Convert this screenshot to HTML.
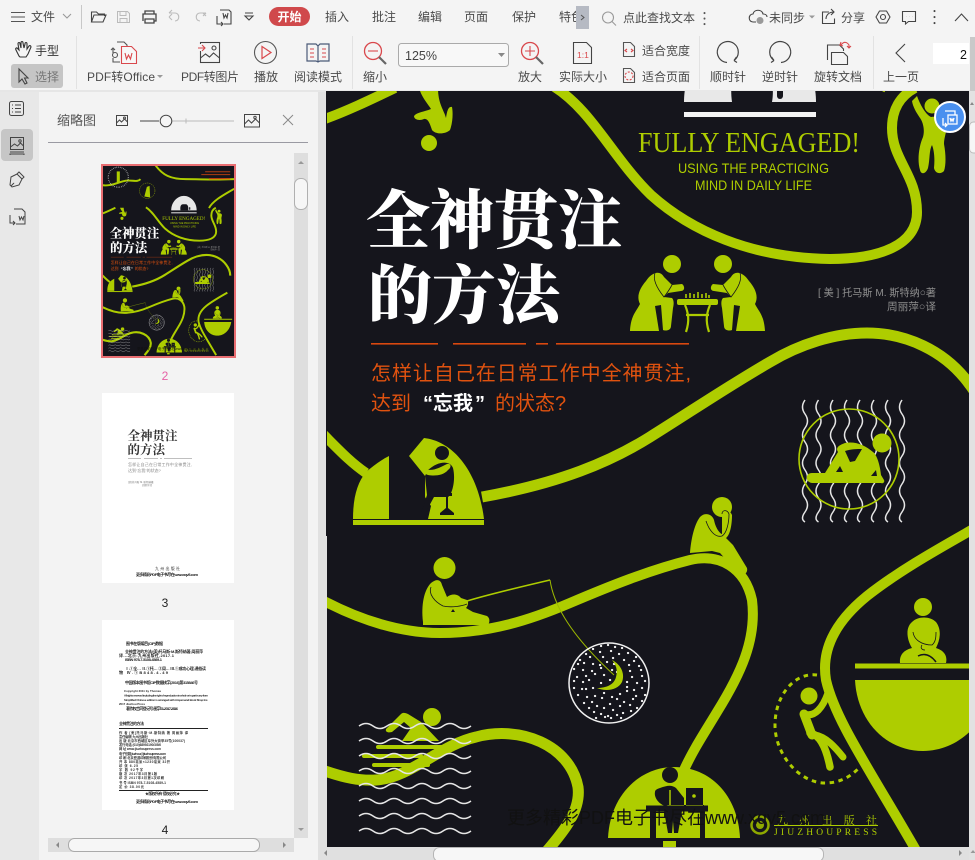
<!DOCTYPE html>
<html lang="zh"><head><meta charset="utf-8"><title>全神贯注的方法</title>
<style>
html,body{margin:0;padding:0;background:#f3f3f3;width:975px;height:860px;overflow:hidden}
svg{display:block}
text{font-family:"Liberation Sans","Noto Sans CJK SC",sans-serif}
.t{font-size:12px;fill:#4a4a4a}
.s{fill:none;stroke:#444;stroke-width:1.1}
.r{fill:none;stroke:#d9484c;stroke-width:1.1}
.b{fill:none;stroke:#aecd00;stroke-width:10}
.y{fill:#aecd00}
.d{fill:#15151c}
.o{fill:none;stroke:#15151c;stroke-width:.8}
</style></head><body>
<svg xmlns="http://www.w3.org/2000/svg" width="975" height="860" viewBox="0 0 975 860">
<defs>
<path id="w" d="M0,0q7,-5 14,0t14,0t14,0t14,0t14,0t14,0t14,0t14,0" fill="none" stroke="#e6e6e6" stroke-width="1.5"/>
<path id="v" d="M0,0q-5,7 0,14t0,14t0,14t0,14t0,14t0,14t0,14t0,14t0,10" fill="none" stroke="#e6e6e6" stroke-width="1.5"/>
<clipPath id="cm"><rect x="327" y="91" width="642" height="756"/></clipPath>
<clipPath id="ct"><rect x="103" y="166" width="131" height="190"/></clipPath>
<g id="cover">
<rect x="326" y="-140" width="690" height="1000" class="d"/>
<!-- bands -->
<path class="b" d="M322,120C345,112 370,100 395,88"/>
<path class="b" d="M553,86C592,110 612,157 651,195C690,230 750,258 830,259C880,259 917,245 917,212C917,175 892,160 892,128C892,110 900,96 915,88"/>
<path class="b" style="stroke-width:11" d="M482,497C560,483 610,462 650,437C690,412 730,385 770,362C800,344 835,333 867,333C905,333 945,350 970,385C985,405 990,425 990,440"/>
<path class="b" d="M322,433C338,449 350,462 366,473"/>
<path class="b" d="M322,600C360,620 400,633 440,633C490,633 530,620 570,603C610,586 650,570 690,560C720,553 745,568 752,600C757,640 740,675 717,712C705,732 693,750 684,770"/>
<path class="b" style="stroke-width:11" d="M322,770C345,778 360,781 376,780C410,778 440,745 476,737C520,725 570,745 578,787C581,810 565,830 546,852"/>
<path class="b" d="M975,528C940,548 900,570 867,596C835,622 821,650 826,680C835,720 870,770 917,852"/>
<!-- top dome -->
<path fill="#e8e8e8" d="M684,102C684,60 715,27 750,27C785,27 816,60 816,102Z"/>
<path class="d" d="M732,102C729,80 735,70 745,70L760,70C770,70 775,85 772,102Z"/>
<rect x="777" y="85" width="6" height="14" rx="3" class="d"/>
<rect x="684" y="112" width="132" height="5" fill="#f3f3f3"/>
<!-- extra top art (visible in thumbnail) -->
<path class="b" d="M322,-30C360,-20 400,-40 440,-50C480,-60 505,-40 525,-60"/>
<circle cx="410" cy="-70" r="52" fill="none" stroke="#d0d0d0" stroke-width="6" stroke-dasharray="3 6"/>
<rect x="402" y="-100" width="16" height="60" class="y"/>
<circle cx="560" cy="0" r="40" fill="none" stroke="#aecd00" stroke-width="2.5" stroke-dasharray="6 5"/>
<path class="y" d="M545,30L558,-20L572,-25L575,35Z"/>
<path class="b" d="M600,-135C640,-80 680,-60 760,-60C840,-60 900,-55 1010,-60"/>
<path class="b" d="M1010,-10C960,20 900,50 880,90"/>
<rect x="860" y="-100" width="130" height="4" fill="#d9480f"/><rect x="840" y="-85" width="150" height="4" fill="#d9480f"/><rect x="880" y="-65" width="110" height="6" fill="#d9480f"/>
<!-- top figure -->
<path class="y" d="M419,88C422,98 428,104 431,109C424,112 417,112 414,116C414,120 420,121 424,119C428,118 430,124 432,130C436,135 446,134 450,130C453,122 453,112 452,107C448,106 447,112 446,118C444,110 438,104 438,88Z"/>
<circle cx="429" cy="143" r="8" class="y"/>
<!-- hanging figure top right -->
<circle cx="932" cy="106" r="7.5" class="y"/>
<path class="y" d="M912,101L917,96C920,104 925,114 931,117C938,116 946,118 947,126C946,134 944,138 944,144C946,155 946,165 944,171C940,175 935,173 934,168C935,158 934,150 932,145C929,150 930,160 928,168C926,174 921,175 920,170C917,160 919,146 923,137C925,130 923,122 920,118C916,112 913,107 912,101Z"/>
<!-- chess players -->
<g id="pl"><path class="y" d="M630,331C631,315 636,312 640,304C636,296 640,288 646,281C652,272 660,270 664,277L672,285L682,284C685,286 685,291 681,291L668,293L664,297L672,298C674,300 674,304 673,308L671,326C671,331 665,331 663,330L661,305L655,306L659,331Z"/>
<circle cx="672" cy="264" r="9" class="y"/>
<path class="o" d="M655,273C652,281 660,292 664,297C668,292 672,285 672,285"/></g>
<use href="#pl" transform="matrix(-1 0 0 1 1395 0)"/>
<rect x="677" y="299" width="41" height="6" rx="2" class="y"/>
<path d="M685,305C688,312 690,320 686,332M710,305C707,312 705,320 709,332M686,315L709,315" fill="none" stroke="#aecd00" stroke-width="2.2"/>
<path d="M686,298v-4M690,298v-5M694,298v-4M698,298v-6M702,298v-4M706,298v-5M709,298v-3" stroke="#aecd00" stroke-width="1.6"/>
<!-- titles -->
<text x="366" y="243" font-size="64" font-weight="900" fill="#fff" textLength="256" style='font-family:"Noto Serif CJK SC",serif'>全神贯注</text>
<text x="368" y="318" font-size="64" font-weight="900" fill="#fff" style='font-family:"Noto Serif CJK SC",serif'>的方法</text>
<g fill="#d9480f"><rect x="371" y="343" width="67" height="1.6"/><rect x="453" y="343" width="73" height="1.6"/><rect x="536" y="343" width="12" height="1.6"/><rect x="556" y="343" width="133" height="1.6"/></g>
<text x="371" y="380" font-size="20" fill="#e0520f" textLength="320">怎样让自己在日常工作中全神贯注,</text>
<text y="410" font-size="20" fill="#e0520f"><tspan x="371">达到</tspan><tspan x="423" fill="#fff" font-weight="700">“</tspan><tspan x="433" fill="#fff" font-weight="700">忘我</tspan><tspan x="475" fill="#fff" font-weight="700">”</tspan><tspan x="495">的状态?</tspan></text>
<text x="638" y="152" font-size="29" fill="#aecd00" textLength="222" lengthAdjust="spacingAndGlyphs" style='font-family:"Liberation Serif",serif'>FULLY ENGAGED!</text>
<text x="678" y="173" font-size="14" fill="#aecd00" textLength="151" lengthAdjust="spacingAndGlyphs">USING THE PRACTICING</text>
<text x="695" y="190" font-size="14" fill="#aecd00" textLength="117" lengthAdjust="spacingAndGlyphs">MIND IN DAILY LIFE</text>
<text x="818" y="296" font-size="10.5" fill="#8e8e8e" textLength="118" lengthAdjust="spacingAndGlyphs">[ 美 ] 托马斯 M. 斯特纳○著</text>
<text x="887" y="310" font-size="10.5" fill="#8e8e8e" textLength="49" lengthAdjust="spacingAndGlyphs">周丽萍○译</text>
<!-- desk dome -->
<path class="y" d="M389,456L389,519L353,519C353,498 357,483 366,472C373,466 381,460 389,456Z"/>
<path class="y" d="M409,456L424,438C452,441 478,470 484,519L428,519L431,506L425,497L425,476Z"/>
<rect x="353" y="520" width="131" height="5" class="y"/>
<circle cx="442" cy="453" r="7" class="d"/>
<path class="d" d="M428,470C438,461 450,460 453,468C456,480 452,495 448,497L434,497L428,508L424,519L420,517L427,495L425,476Z"/>
<path class="y" d="M426,469C432,472 441,467 447,464C451,463 452,467 448,470C443,476 434,476 428,475C424,474 423,470 426,469Z"/>
<path class="d" d="M441,493h11v3h-4v12l6,5v2h-14v-2l6,-5v-12h-5Z"/>
<!-- thinker -->
<path class="y" d="M690,553C691,540 694,525 700,517C705,512 712,514 714,520C716,530 721,534 722,534L722,515C724,508 730,510 732,515C732,525 730,535 726,538L733,545L747,568C748,572 745,575 742,575L728,562L720,553L712,551Z"/>
<circle cx="722" cy="507" r="10" class="y"/>
<path class="o" d="M706,521C709,530 715,538 722,536C727,533 729,522 729,514C727,509 722,510 722,514"/>
<!-- relaxed figure -->
<use href="#v" x="805" y="400"/><use href="#v" x="818.500" y="400"/><use href="#v" x="833" y="400"/><use href="#v" x="847" y="400"/><use href="#v" x="860" y="400"/><use href="#v" x="874" y="400"/><use href="#v" x="888" y="400"/><use href="#v" x="902" y="400"/>
<circle cx="849" cy="459" r="50" fill="none" stroke="#aecd00" stroke-width="1.6"/>
<path class="y" d="M812,473L825,473L838,452C835,447 840,445 845,443C855,441 865,445 873,452C877,455 880,465 881,475L884,480C885,482 883,484 881,483L812,483C805,482 805,473 812,473Z"/>
<circle cx="882" cy="443" r="9.500" class="y"/>
<path class="d" d="M836,472L840,466L843,472ZM845,451C851,449 857,449 862,449L855,461L850,462ZM871,476L876,470L877,476Z"/>
<!-- fisherman -->
<circle cx="444.500" cy="568" r="11" class="y"/>
<path class="y" d="M423,622C421,605 424,590 431,583C437,578 441,580 442,585L447,597C452,593 458,594 461,598L467,600C469,602 468,606 466,608L473,612L487,616C490,618 490,622 488,625L423,625Z"/>
<path class="o" d="M431,587C428,594 435,602 443,606C452,608 462,606 467,604"/>
<path class="y" d="M451,595L457,596L457,600L451,600Z"/>
<path d="M451,612l2,-3l2,3Z" class="d"/>
<path d="M467,601C490,594 520,587 550,580" fill="none" stroke="#aecd00" stroke-width="1.500"/>
<path d="M550,580C553,600 565,630 614,675" fill="none" stroke="#9db900" stroke-width="1"/>
<!-- moon -->
<circle cx="609" cy="683" r="40" fill="none" stroke="#f0f0f0" stroke-width="1.500"/>
<path d="M601,646h.1M608,645h.1M615,647h.1M622,648h.1M593,649h.1M586,654h.1M600,652h.1M611,651h.1M619,654h.1M628,653h.1M636,657h.1M580,660h.1M590,657h.1M603,657h.1M613,658h.1M624,660h.1M634,661h.1M578,664h.1M584,663h.1M593,664h.1M600,665h.1M607,662h.1M614,664h.1M629,665h.1M639,666h.1M574,669h.1M583,670h.1M592,671h.1M601,668h.1M612,670h.1M630,671h.1M641,670h.1M577,677h.1M586,676h.1M595,674h.1M604,675h.1M617,672h.1M632,677h.1M642,676h.1M574,681h.1M583,682h.1M589,680h.1M601,683h.1M610,680h.1M627,682h.1M637,683h.1M645,681h.1M574,688h.1M582,689h.1M586,689h.1M593,688h.1M627,687h.1M634,690h.1M642,688h.1M578,695h.1M587,697h.1M595,696h.1M604,693h.1M612,697h.1M620,694h.1M627,691h.1M636,696h.1M645,695h.1M584,703h.1M592,702h.1M602,698h.1M610,704h.1M617,699h.1M624,702h.1M633,699h.1M642,701h.1M589,708h.1M597,706h.1M604,708h.1M613,710h.1M620,706h.1M630,705h.1M637,708h.1M594,712h.1M601,714h.1M608,716h.1M617,715h.1M623,713h.1M631,711h.1M596,718h.1M605,717h.1M611,718h.1M621,718h.1" stroke="#f0f0f0" stroke-width="2.300" stroke-linecap="round" fill="none"/>
<path class="y" d="M612,660C622,665 625,675 622,682C618,690 606,692 597,688C606,688 614,685 616,677C618,670 616,665 612,660Z"/>
<!-- swimmer -->
<circle cx="432" cy="717" r="9" class="y"/>
<path class="y" d="M386,729L401,714C403,712 406,713 408,714L421,722L439,741L402,741L411,728L404,722L392,732C388,733 385,732 386,729Z"/>
<rect x="376" y="745" width="75" height="4" rx="2" class="y"/><rect x="362" y="754" width="61" height="4" rx="2" class="y"/><rect x="372" y="763" width="58" height="4" rx="2" class="y"/>
<use href="#w" x="359" y="726"/><use href="#w" x="359" y="741"/><use href="#w" x="359" y="756"/><use href="#w" x="359" y="771"/><use href="#w" x="359" y="786"/><use href="#w" x="359" y="801"/><use href="#w" x="359" y="816"/><use href="#w" x="359" y="831"/>
<!-- bowl -->
<path class="y" d="M855,680L995,680C990,720 960,751 923,751C885,751 857,720 855,680Z"/>
<rect x="855" y="663.500" width="145" height="5" class="y"/>
<circle cx="923" cy="607" r="9" class="y"/>
<path class="y" d="M900,663C899,652 908,649 912,648C907,640 905,628 912,622C918,616 930,616 936,622C942,630 940,640 936,648C942,650 948,654 946,663Z"/>
<path class="o" d="M913,632C914,640 922,645 932,645C936,642 936,636 936,632M922,645C920,648 922,650 925,650"/>
<path d="M918,656C924,653 930,654 936,662" fill="none" stroke="#15151c" stroke-width="1.500"/>
<!-- climber -->
<path d="M817,675C795,672 775,695 775,725C775,755 800,783 825,783C842,783 852,775 860,767" fill="none" stroke="#aecd00" stroke-width="3" stroke-dasharray="4.500 4.500"/>
<circle cx="809" cy="696" r="8.500" class="y"/>
<g fill="none" stroke="#aecd00" stroke-linecap="round"><path stroke-width="7" d="M804,714C815,718 823,707 828,693"/><path stroke-width="9" d="M804,714L812,735"/><path stroke-width="7.500" d="M810,733C820,735 826,747 830,767"/><path stroke-width="7" d="M815,735C826,737 835,747 843,757"/></g>
<!-- bottom dome -->
<path class="y" d="M608,838C610,795 640,767 674,767C710,767 738,795 740,838Z"/>
<circle cx="670" cy="775" r="8" class="d"/>
<path class="d" d="M660,788C668,785 672,785 676,788L684,798L684,805L668,805L665,806C657,803 654,796 655,792C655,790 657,789 660,788Z"/>
<path d="M670,790L670,805" stroke="#aecd00" stroke-width="1.500"/>
<path class="d" d="M686,788h17v18h-17ZM684,806h20v-1h-20Z"/>
<circle cx="694" cy="796" r="1.800" class="y"/>
<rect x="646" y="805.500" width="62" height="6" class="d"/>
<rect x="650" y="811" width="6" height="27" class="d"/><rect x="700" y="811" width="5" height="27" class="d"/>
<path class="d" d="M664,811h18l-4,22h-4l-1,-12l-1,12h-4Z"/>
<rect x="663" y="841" width="13" height="7" class="y"/>
<circle cx="760" cy="825" r="8.500" fill="none" stroke="#8ea800" stroke-width="2.500"/><circle cx="760" cy="825" r="4" fill="#8ea800"/>
<text x="777" y="824" font-size="11" fill="#aecd00" textLength="100" style='font-family:"Noto Serif CJK SC",serif'>九 州 出 版 社</text>
<rect x="774" y="825" width="104" height="1" fill="#aecd00"/>
<text x="774" y="835" font-size="9.500" fill="#aecd00" textLength="103" style='font-family:"Liberation Serif",serif'>JIUZHOUPRESS</text>
<text x="507" y="824" font-size="18" fill="#111" textLength="318">更多精彩PDF电子书尽在www.xqv5.com</text>
</g>
</defs>

<rect width="975" height="860" fill="#f3f3f3"/>
<!-- main -->
<rect x="318" y="91" width="9" height="769" fill="#e1e1e1"/>
<rect x="969" y="91" width="6" height="769" fill="#e2e2e2"/>
<g clip-path="url(#cm)"><use href="#cover"/></g>
<rect x="326" y="91" width="1" height="445" fill="#15151c"/>
<!-- right scroll -->
<path d="M972,102l-2,3h4Z" fill="#888"/>
<rect x="969.500" y="122" width="10" height="31" rx="4" fill="#f6f6f6" stroke="#bbb"/>
<path d="M973,847l-2.500,3h5Z" fill="#999" transform="translate(0,3)"/>
<!-- bottom scroll -->
<rect x="320" y="847" width="649" height="13" fill="#e0e0e0"/>
<path d="M327,850v6l-3,-3Z" fill="#888"/>
<rect x="433.500" y="847.500" width="390" height="14" rx="6" fill="#f7f7f7" stroke="#b5b5b5"/>
<path d="M959,850v6l3,-3Z" fill="#888"/>
<!-- float -->
<circle cx="950" cy="117" r="15" fill="#4a90ef" stroke="#fff" stroke-width="2"/>
<g fill="none" stroke="#fff" stroke-width="1.300"><path d="M945,111h10v4"/><rect x="948" y="115" width="9" height="9" fill="#4a90ef"/><path d="M950,118l1,3l1,-2l1,2l1,-3"/><path d="M943,118v7h4m-2,-2l2,2l-2,2"/></g>

<!-- sidebar -->
<rect x="0" y="91" width="39" height="769" fill="#e8e8e8"/>
<rect x="1" y="129" width="32" height="32" rx="4" fill="#c6c6c6"/>
<g class="s" style="fill:none;stroke:#444;stroke-width:1">
<rect x="9.500" y="101.500" width="14" height="14" rx="2"/><path d="M12,105h1M15,105h6M12,108.500h1M15,108.500h6M12,112h1M15,112h6"/>
<rect x="10.500" y="137.500" width="13" height="12" /><path d="M10.500,147l4,-3l3,2l3,-3l3,3"/><circle cx="20" cy="141" r="1.200"/><path d="M10,152h14M10,155v-1h14v1"/>
<path d="M11,177l6,-3l5,5l-3,6l-7,2l-2,-2ZM17,174l2,-2l5,5l-2,2M14,183h.1M11,186l3,-3"/>
<path d="M14,209h8l3,3v12h-9M19,216l1,4l1.500,-3l1.500,3l1,-4"/><path d="M10,215v8h5m-2,-2l2,2l-2,2"/>
</g>

<!-- thumbnail panel -->
<rect x="39" y="91" width="279" height="769" fill="#f3f3f3"/>
<text x="57" y="125" font-size="13" fill="#555">缩略图</text>
<g fill="none" stroke="#444" stroke-width="1"><rect x="116.500" y="115.500" width="11" height="10"/><path d="M116.500,123l3,-3l2,2l3,-3l3,3"/><circle cx="124.500" cy="118" r="1"/>
<rect x="244.500" y="114.500" width="15" height="12.500"/><path d="M244.500,124l4,-4l3,3l4,-4l4,4"/><circle cx="255" cy="117.500" r="1.200"/>
<path d="M283,115l10,10M293,115l-10,10" stroke="#888"/></g>
<path d="M140,121h19" stroke="#444" stroke-width="1"/><path d="M172,121h62M186,118.500v5" stroke="#bbb" stroke-width="1"/>
<circle cx="166" cy="121" r="5.800" fill="#f5f5f5" stroke="#444"/>
<rect x="48" y="142" width="260" height="1" fill="#9a9aa2"/>
<!-- vscroll -->
<rect x="294" y="153" width="14" height="685" fill="#dedede"/>
<path d="M301,161l-3,3h6Z" fill="#999"/>
<rect x="294.500" y="178.500" width="13" height="31" rx="6" fill="#f6f6f6" stroke="#b0b0b0"/>
<path d="M298,828h6l-3,3Z" fill="#999"/>
<!-- hscroll -->
<rect x="48" y="838" width="246" height="14" fill="#dedede"/>
<path d="M59,842v6l-3,-3Z" fill="#888"/><path d="M283,842v6l3,-3Z" fill="#888"/>
<rect x="68.500" y="838.500" width="191" height="13" rx="6" fill="#f6f6f6" stroke="#aaa"/>

<!-- thumb page 2 -->
<rect x="101" y="164" width="135" height="194" fill="#e96e72"/>
<rect x="103" y="166" width="131" height="190" fill="#15151c"/>
<g clip-path="url(#ct)"><use href="#cover" transform="translate(39.170 190.720) scale(.193)"/></g>
<text x="165" y="380" font-size="12" fill="#e660a5" text-anchor="middle">2</text>

<!-- thumb page 3 -->
<rect x="102" y="393" width="132" height="190" fill="#fff"/>
<text x="127.500" y="440" font-size="12.500" font-weight="700" fill="#333" style='font-family:"Noto Serif CJK SC",serif'>全神贯注</text>
<text x="127.500" y="454" font-size="12.500" font-weight="700" fill="#333" style='font-family:"Noto Serif CJK SC",serif'>的方法</text>
<path d="M128,458.500h13M144,458.500h14M160,458.500h2M164,458.500h28" stroke="#aaa" stroke-width=".8"/>
<text x="128" y="466" font-size="4" fill="#888" textLength="64">怎样让自己在日常工作中全神贯注,</text>
<text x="128" y="472" font-size="4" fill="#888">达到“忘我”的状态?</text>
<text x="128" y="483" font-size="2.500" fill="#777">[美]托马斯 M. 斯特纳著</text><text x="142" y="486" font-size="2.500" fill="#888">周丽萍译</text>
<text x="155" y="570" font-size="4" fill="#333" textLength="25">九州出版社</text>
<text x="136" y="576" font-size="4" font-weight="700" fill="#222" textLength="62">更多精彩PDF电子书尽在www.xqv5.com</text>
<text x="165" y="607" font-size="12" fill="#222" text-anchor="middle">3</text>

<!-- thumb page 4 -->
<rect x="102" y="620" width="132" height="190" fill="#fff"/>
<g font-size="4" font-weight="700" fill="#222">
<text x="126" y="645" textLength="37">图书在版编目(CIP)数据</text>
<text x="125" y="653" textLength="78">全神贯注的方法/(美)托马斯·M.斯特纳著;周丽萍</text>
<text x="119" y="657" textLength="55">译.--北京:九州出版社,2017.1</text>
<text x="125" y="661" textLength="37">ISBN 978-7-5108-4589-1</text>
<text x="125" y="670" textLength="81">Ⅰ.①全… Ⅱ.①托… ②周… Ⅲ.①成功心理-通俗读</text>
<text x="119" y="674" textLength="49">物 Ⅳ.①B848.4-49</text>
<text x="125" y="684" textLength="73">中国版本图书馆CIP数据核字(2016)第315846号</text>
<text x="124" y="692" font-size="2.800" textLength="37">Copyright 2011 by Thomas</text>
<text x="124" y="696.500" font-size="2.800" textLength="84">All rights reserved including the right of reproduction in whole or in part in any form</text>
<text x="124" y="701" font-size="2.800" textLength="84">Simplified Chinese edition is arranged with Ampersand Book Shop Inc.</text>
<text x="119" y="705" font-size="2.800" textLength="26">2017 Jiuzhou Press</text>
<text x="126" y="710" textLength="52">著作权合同登记号:图字01-2017-2816</text>
<text x="119" y="725" textLength="25">全神贯注的方法</text>
</g>
<rect x="119" y="728" width="89" height="1" fill="#222"/>
<g font-size="3.300" font-weight="700" fill="#333">
<text x="119" y="734" textLength="69">作 者 [美]托马斯·M.斯特纳 著 周丽萍 译</text>
<text x="119" y="738" textLength="29">责任编辑 九州出版社</text>
<text x="119" y="742" textLength="66">出 版 北京市西城区阜外大街甲35号(100037)</text>
<text x="119" y="746" textLength="42">发行电话 (010)68992190/3/5/6</text>
<text x="119" y="750" textLength="42">网 址 www.jiuzhoupress.com</text>
<text x="119" y="755" textLength="47">电子信箱 jiuzhou@jiuzhoupress.com</text>
<text x="119" y="759" textLength="47">印 刷 北京盛通印刷股份有限公司</text>
<text x="119" y="763" textLength="51">开 本 880毫米×1230毫米 32开</text>
<text x="119" y="767" textLength="19">印 张 6.25</text>
<text x="119" y="771" textLength="24">字 数 92千字</text>
<text x="119" y="775" textLength="38">版 次 2017年3月第1版</text>
<text x="119" y="779" textLength="45">印 次 2017年3月第1次印刷</text>
<text x="119" y="784" textLength="47">书 号 ISBN 978-7-5108-4589-1</text>
<text x="119" y="788" textLength="25">定 价 38.00元</text>
</g>
<rect x="119" y="790" width="89" height="1" fill="#222"/>
<text x="145" y="795" font-size="3.800" font-weight="700" fill="#222" textLength="35">★版权所有 侵权必究★</text>
<text x="136" y="803" font-size="4" font-weight="700" fill="#222" textLength="62">更多精彩PDF电子书尽在www.xqv5.com</text>
<text x="165" y="834" font-size="12" fill="#222" text-anchor="middle">4</text>

<!-- toolbar -->
<rect width="975" height="90" fill="#f4f4f4"/>
<rect y="90" width="326" height="2" fill="#e6e6e6"/>
<rect x="326" y="90" width="649" height="1" fill="#e8e8e8"/>
<!-- row 1 -->
<path d="M11,12.500h14M11,17h14M11,21.500h14" stroke="#555" stroke-width="1"/>
<text class="t" x="31" y="21">文件</text>
<path d="M63,14l4,4l4,-4" class="s" style="stroke:#999"/>
<rect x="81" y="5" width="1" height="24" fill="#c8c8c8"/>
<path class="s" d="M91.500,22V12h5l2,2h6v2M91.500,22l2.500,-7h12l-3,7Z"/>
<path d="M117.500,11.500h10l2,2v9h-12ZM120,11.500v4h6v-4M120,22.500v-4h7v4" fill="none" stroke="#bbb" stroke-width="1"/>
<path class="s" d="M145,14v-3h9v3M143,21v-7h13v7h-2M145,19h9v4h-9Z" style="stroke-width:1.300"/>
<path d="M172,16l-3,3m0,0l3,3M169,15l3,-3M169,15h6c5,0 5,8 0,8" fill="none" stroke="#bbb" stroke-width="1.100" transform="translate(0,-2)"/>
<path d="M203,16l3,-3M203,13l3,3M206,13h-6c-5,0 -5,8 0,8" fill="none" stroke="#bbb" stroke-width="1.100"/>
<path class="s" d="M220,10h9l2,2v12h-7M223,13l1,5l1.500,-3l1.500,3l1,-5"/><path class="s" d="M217,16v8h6m-2,-2l2,2l-2,2"/>
<path class="s" d="M245,16h8l-4,4ZM245,13h8"/>
<rect x="269" y="7" width="41" height="19" rx="9.500" fill="#d0494b"/>
<text x="277.500" y="21" font-size="12" font-weight="700" fill="#fff">开始</text>
<text class="t" x="325" y="21">插入</text><text class="t" x="372" y="21">批注</text><text class="t" x="418" y="21">编辑</text><text class="t" x="464" y="21">页面</text><text class="t" x="512" y="21">保护</text><text class="t" x="559" y="21">特色</text>
<rect x="576" y="6" width="13" height="23" fill="#b6bac3"/>
<path d="M581,15l3,2.500l-3,2.500" fill="none" stroke="#555"/>
<circle cx="608" cy="17.500" r="5.500" class="s" style="stroke:#999"/><path d="M612,21.500l4,4" stroke="#999" stroke-width="1.100"/>
<text class="t" x="623" y="22">点此查找文本</text>
<path d="M704.500,13v.1M704.500,18.500v.1M704.500,24v.1" stroke="#555" stroke-width="2" stroke-linecap="round"/>
<path class="s" d="M756,22h-3c-5,0 -5,-8 0,-8c1,-5 9,-5 10,0c2,0 4,1 4,3"/><circle cx="760" cy="20.500" r="3.500" fill="#999"/>
<text class="t" x="769" y="22">未同步</text><path d="M809,15.500h6l-3,3Z" fill="#999"/>
<path class="s" d="M829,12h-6.500v11.500h12v-5M826,19c0,-4 3,-7 8,-7M831,9l3,3l-3,3"/>
<text class="t" x="841" y="22">分享</text>
<path class="s" stroke-linejoin="round" d="M879.500,11L886.500,11L890,17L886.500,23L879.500,23L876,17Z" style="stroke-linejoin:round"/><circle cx="883" cy="17" r="2.500" class="s"/>
<path class="s" d="M902.500,11.500h13v10h-7l-3,2.500v-2.500h-3ZM906,16.500h.1M909,16.500h.1M912,16.500h.1"/>
<path d="M934.500,11v.1M934.500,17v.1M934.500,23v.1" stroke="#444" stroke-width="2" stroke-linecap="round"/>
<path class="s" d="M955,21l6.500,-7l6.500,7"/>

<!-- row 2 -->
<rect x="76" y="36" width="1" height="53" fill="#e2e2e2"/><rect x="352" y="36" width="1" height="53" fill="#e2e2e2"/><rect x="699" y="36" width="1" height="53" fill="#e2e2e2"/><rect x="873" y="36" width="1" height="53" fill="#e2e2e2"/>
<path class="s" style="stroke:#333" d="M19,56L16,50C15,48 17,47 18,49L19,50L18,44C18,42 20,42 20,44L21,48L21,43C21,41 23,41 23,43L24,48L25,44C25,42 27,42 27,44L27,49L29,46C30,45 31,46 31,47L28,54L26,57L20,57Z"/>
<text class="t" x="35" y="55" style="fill:#333">手型</text>
<rect x="11" y="64" width="52" height="24" rx="3" fill="#c5c5c5"/>
<path class="s" d="M19,69L19,82L22,79L25,84L27,83L24.500,78L28,78Z"/>
<text x="35" y="81" font-size="12" fill="#777">选择</text>
<!-- pdf2office -->
<path class="s" d="M117,42h7l3,3v3M113,53v-4M113,58v4h7M115,50l-2,-2l-2,2" style="stroke:#555"/><circle cx="115" cy="55" r="2.500" class="s" style="stroke:#555"/>
<path d="M121.500,46.500h10l5,5v12h-15Z" fill="#f7f7f7" stroke="#d9484c" stroke-width="1.100"/><path class="r" d="M125,53l1.500,6l2,-4l2,4l1.500,-6"/>
<text class="t" x="87" y="81" textLength="68">PDF转Office</text><path d="M157,75h6l-3,3Z" fill="#999"/>
<!-- pdf2img -->
<rect x="200.500" y="42.500" width="19" height="20" class="s"/><path class="s" d="M200.500,58l5,-4l4,3l4,-4l6,5"/><circle cx="214" cy="48" r="2" class="s"/>
<rect x="197" y="44" width="8" height="7" fill="#f4f4f4"/><path class="r" d="M198,48h7m-3,-3l3,3l-3,3"/>
<text class="t" x="181" y="81" textLength="58">PDF转图片</text>
<!-- play -->
<circle cx="265.500" cy="52.500" r="11" class="s" style="stroke:#555"/><path d="M262,46.500v12l9,-6Z" fill="none" stroke="#d9484c" stroke-width="1.200"/>
<text class="t" x="254" y="81">播放</text>
<!-- read -->
<path d="M307,44h9l2,2l2,-2h9v17h-9l-2,1l-2,-1h-9ZM318,46v16" fill="none" stroke="#4a5a78" stroke-width="1.200"/>
<path class="r" d="M310,49h4M310,53h4M310,57h4M322,49h4M322,53h4M322,57h4"/>
<text class="t" x="294" y="81">阅读模式</text>
<!-- zoom out -->
<circle cx="373" cy="51" r="8.500" class="r" style="stroke-width:1.300"/><path class="r" d="M368,51h10"/><path d="M379,57l7,7" stroke="#666" stroke-width="2.200"/>
<text class="t" x="363" y="81">缩小</text>
<rect x="398.500" y="43.500" width="110" height="23" rx="3" fill="#f8f8f8" stroke="#aaa"/>
<text x="405" y="60" font-size="12.500" fill="#444">125%</text><path d="M498,53h7l-3.500,4Z" fill="#888"/>
<!-- zoom in -->
<circle cx="530" cy="51" r="8.500" class="r" style="stroke-width:1.300"/><path class="r" d="M525,51h10M530,46v10"/><path d="M536,57l7,7" stroke="#666" stroke-width="2.200"/>
<text class="t" x="518" y="81">放大</text>
<!-- 1:1 -->
<path class="s" d="M573.500,42.500h13l5,5v16h-18Z"/><text x="577" y="58" font-size="8.500" fill="#d9484c">1:1</text>
<text class="t" x="559" y="81">实际大小</text>
<!-- fit -->
<path class="s" d="M623.500,42.500h7l4,4v10h-11Z" style="stroke:#555"/><path class="r" d="M627,49l-2,1.500l2,1.500M631,49l2,1.500l-2,1.500"/>
<text class="t" x="642" y="55">适合宽度</text>
<path class="s" d="M623.500,68.500h7l4,4v10h-11Z" style="stroke:#555"/><circle cx="629" cy="76" r="4" class="r" stroke-dasharray="2 1.500"/>
<text class="t" x="642" y="81">适合页面</text>
<!-- rotate -->
<path class="s" d="M734,60.500A10.500,10.500 0 1 0 727,62.500M734,60.500l2.500,-3.500M734,60.500l3,2" style="stroke-width:1.200"/>
<text class="t" x="710" y="81">顺时针</text>
<path class="s" d="M774,60.500A10.500,10.500 0 1 1 781,62.500M774,60.500l-2.500,-3.500M774,60.500l-3,2" style="stroke-width:1.200"/>
<text class="t" x="762" y="81">逆时针</text>
<!-- rotate doc -->
<path class="s" d="M827.500,60v-15h12l4,4v2"/><path d="M831.500,52.500h12l4,4v8h-16Z" fill="#f4f4f4" stroke="#444" stroke-width="1.100"/>
<path class="r" d="M841,45c3,-4 6,-3 8,0v3m-2,-2l2,2l2,-2M841,42l-1,3l3,1"/>
<text class="t" x="814" y="81">旋转文档</text>
<path class="s" d="M905,44l-9,9l9,9"/>
<text class="t" x="883" y="81">上一页</text>
<rect x="933" y="43" width="36" height="21" fill="#fff"/>
<text x="967" y="59" font-size="12.500" fill="#111" text-anchor="end">2</text>
<rect x="970" y="37" width="5" height="54" fill="#c9c9c9"/>
</svg>
</body></html>
